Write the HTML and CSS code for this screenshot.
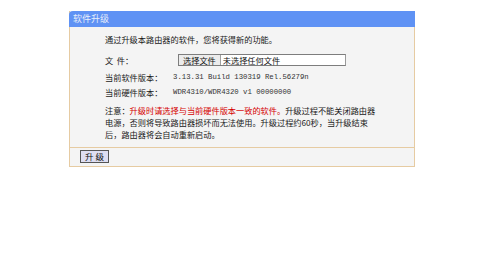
FILE: index.html
```html
<!DOCTYPE html>
<html lang="zh-CN">
<head>
    <meta charset="UTF-8">
    <title>软件升级</title>
    <link rel="stylesheet" href="styles.css">
</head>
<body>
    <div class="panel">
        <div class="panel-title">软件升级</div>

        <div class="panel-body">
            <p class="intro">通过升级本路由器的软件，您将获得新的功能。</p>

            <div class="row row-file">
                <span class="label">文&nbsp;&nbsp;件：</span>
                <span class="file-box">
                    <span class="file-btn">选择文件</span>
                    <span class="file-name">未选择任何文件</span>
                </span>
            </div>

            <div class="row row-sw">
                <span class="label">当前软件版本：</span>
                <span class="value">3.13.31 Build 130319 Rel.56279n</span>
            </div>
            <div class="row row-hw">
                <span class="label">当前硬件版本：</span>
                <span class="value">WDR4310/WDR4320 v1 00000000</span>
            </div>

            <p class="notice">注意：<span class="warn">升级时请选择与当前硬件版本一致的软件。</span>升级过程不能关闭路由器<br>电源，否则将导致路由器损坏而无法使用。升级过程约60秒，当升级结束<br>后，路由器将会自动重新启动。</p>
        </div>

        <div class="panel-footer">
            <button class="btn-upgrade">升 级</button>
        </div>
    </div>
</body>
</html>
```

FILE: styles.css
```css
* {
    margin: 0;
    padding: 0;
    box-sizing: border-box;
}

body {
    font-family: "Noto Sans CJK SC", "Noto Sans", sans-serif;
    font-size: 8.2px;
    line-height: 12px;
    color: #1a1a1a;
    background: #fff;
}

.panel {
    width: 346px;
    margin: 11px 0 0 69px;
    background: #f4f4f4;
    border: 1px solid #e6cba2;
    border-top: none;
}

.panel-title {
    height: 16px;
    line-height: 16px;
    padding-left: 4px;
    margin: 0 -1px;
    background: #5f92f4;
    color: #e8eefa;
    font-size: 9px;
    border-top-left-radius: 4px;
}

.panel-body {
    padding: 6px 0 7px 35px;
}

.intro {
    height: 12px;
}

.row {
    display: flex;
    align-items: center;
    height: 12px;
}

.row-file {
    margin-top: 9px;
}

.row-sw {
    margin-top: 5px;
}

.row-hw {
    margin-top: 3px;
}

.label {
    width: 68px;
    flex-shrink: 0;
}

.value {
    font-family: "Liberation Mono", monospace;
    font-size: 7.3px;
    color: #333;
}

.file-box {
    display: flex;
    width: 168px;
    height: 12px;
    margin-left: 5px;
    background: #fff;
    border: 1px solid #7d7d7d;
    border-right-color: #9a9a9a;
    line-height: 10px;
}

.file-btn {
    padding: 0 4px;
    background: #ececec;
    border-right: 1px solid #a0a0a0;
    color: #111;
}

.file-name {
    padding-left: 2px;
    color: #111;
}

.notice {
    margin-top: 6px;
}

.warn {
    color: #d40000;
}

.panel-footer {
    border-top: 1px solid #e6cba2;
    padding: 2px 0 3px 10px;
}

.btn-upgrade {
    display: block;
    width: 29px;
    height: 13px;
    font-family: "Noto Sans CJK SC", sans-serif;
    font-size: 8.5px;
    line-height: 11px;
    color: #111;
    background: #dedef2;
    border: 1px solid #555;
}
```
